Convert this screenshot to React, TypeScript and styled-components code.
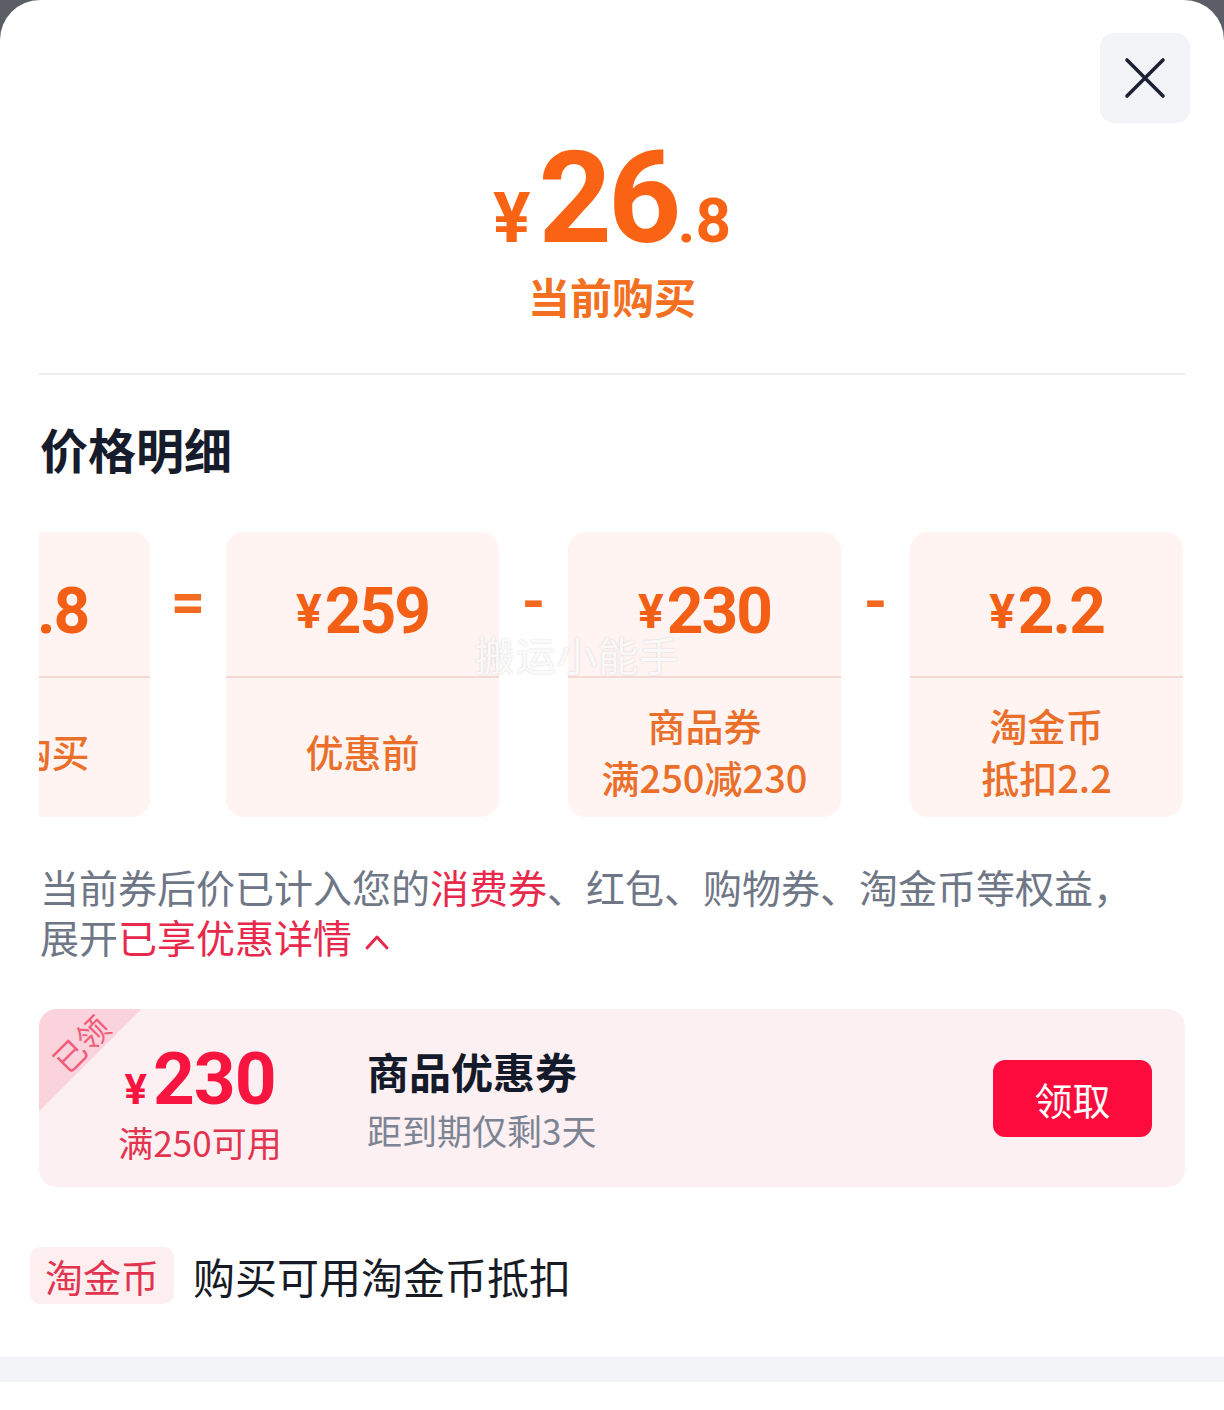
import React from 'react';
import styled, { createGlobalStyle } from 'styled-components';

const CJK = `"Noto Sans CJK SC", "Noto Sans", sans-serif`;
const NUM = `Roboto, "Noto Sans CJK SC", sans-serif`;

const Global = createGlobalStyle`
  html, body { margin: 0; padding: 0; background: #5b5e66; }
  body { font-family: ${CJK}; -webkit-font-smoothing: antialiased; }
`;

const Sheet = styled.div`
  position: relative;
  background: #ffffff;
  border-radius: 40px 40px 0 0;
  min-height: 1410px;
  display: flex;
  flex-direction: column;
  overflow: hidden;
`;

const CloseButton = styled.button`
  position: absolute;
  top: 33px;
  right: 34px;
  width: 90px;
  height: 90px;
  border: none;
  border-radius: 14px;
  background: #f2f4f7;
  display: flex;
  align-items: center;
  justify-content: center;
  padding: 0;
`;

const Header = styled.div`
  display: flex;
  flex-direction: column;
  align-items: center;
  padding-top: 134px;
`;

const BigPrice = styled.div`
  font-family: ${NUM};
  font-weight: 700;
  color: #fb6314;
  line-height: 1;
  font-size: 128px;
  white-space: nowrap;
`;

const Yen = styled.span<{ $size: number; $gap?: number }>`
  font-size: ${p => p.$size}px;
  margin-right: ${p => p.$gap ?? 2}px;
`;

const Digits = styled.span<{ $size: number; $spacing?: number }>`
  font-size: ${p => p.$size}px;
  letter-spacing: ${p => p.$spacing ?? 0}px;
`;

const HeaderLabel = styled.div`
  margin-top: 13px;
  font-size: 42px;
  line-height: 42px;
  font-weight: 700;
  color: #f2701f;
`;

const Divider = styled.div`
  height: 2px;
  background: #ececee;
  margin: 56px 39px 0;
`;

const SectionTitle = styled.h2`
  margin: 49px 0 0 40px;
  font-size: 48px;
  line-height: 48px;
  font-weight: 700;
  color: #161c2b;
`;

const TrackViewport = styled.div`
  margin: 60px 39px 0;
  overflow: hidden;
`;

const Track = styled.div`
  display: flex;
  margin-left: -162px;
`;

const Card = styled.div`
  flex: none;
  width: 273px;
  height: 285px;
  border-radius: 18px;
  background: #fff4f1;
  display: flex;
  flex-direction: column;
`;

const CardTop = styled.div`
  height: 146px;
  display: flex;
  align-items: center;
  justify-content: center;
  padding-top: 16px;
  box-sizing: border-box;
  border-bottom: 2px solid #f6d9d5;
  font-family: ${NUM};
  font-weight: 700;
  color: #f45f16;
  line-height: 1;
  white-space: nowrap;
`;

const CardBottom = styled.div`
  flex: 1;
  display: flex;
  flex-direction: column;
  align-items: center;
  justify-content: center;
  padding-top: 6px;
  font-size: 38px;
  line-height: 52px;
  font-weight: 500;
  color: #ea6f2b;
  white-space: nowrap;
`;

const Operator = styled.div<{ $width: number }>`
  flex: none;
  width: ${p => p.$width}px;
  height: 146px;
  display: flex;
  align-items: center;
  justify-content: center;
  padding-bottom: 6px;
  box-sizing: border-box;
  font-family: ${NUM};
  font-weight: 700;
  font-size: 60px;
  line-height: 1;
  color: #f26a1f;
`;

const Notice = styled.p`
  margin: 44px 0 0 40px;
  max-width: 1100px;
  font-size: 39px;
  line-height: 50px;
  color: #6f7787;
`;

const Highlight = styled.span`
  color: #e9294b;
`;

const Chevron = styled.svg`
  display: inline-block;
  width: 26px;
  height: 18px;
  margin-left: 12px;
  vertical-align: 2px;
`;

const Coupon = styled.div`
  position: relative;
  margin: 48px 39px 0;
  height: 178px;
  border-radius: 18px;
  background: #fdf0f2;
  display: flex;
  align-items: center;
  padding: 0 33px 0 0;
  overflow: hidden;
`;

const Ribbon = styled.div`
  position: absolute;
  left: 0;
  top: 0;
  width: 102px;
  height: 102px;
  background: linear-gradient(135deg, #fad3dc 50%, transparent 50%);
`;

const RibbonText = styled.span`
  position: absolute;
  left: 9px;
  top: 18px;
  font-size: 32px;
  line-height: 32px;
  color: #ef5e7c;
  transform: rotate(-45deg);
  white-space: nowrap;
`;

const Amount = styled.div`
  flex: none;
  width: 166px;
  margin-left: 78px;
  padding-top: 8px;
  display: flex;
  flex-direction: column;
  align-items: center;
`;

const AmountValue = styled.div`
  font-family: ${NUM};
  font-weight: 700;
  color: #f7143e;
  line-height: 1;
  white-space: nowrap;
`;

const AmountRule = styled.div`
  margin-top: 6px;
  font-size: 35px;
  line-height: 40px;
  color: #e2334f;
  white-space: nowrap;
`;

const CouponInfo = styled.div`
  flex: 1;
  margin-left: 84px;
  display: flex;
  flex-direction: column;
`;

const CouponTitle = styled.div`
  font-size: 42px;
  line-height: 52px;
  font-weight: 700;
  color: #141a29;
`;

const CouponSub = styled.div`
  margin-top: 12px;
  font-size: 35px;
  line-height: 42px;
  color: #7c8494;
`;

const ClaimButton = styled.button`
  flex: none;
  width: 159px;
  height: 77px;
  border: none;
  border-radius: 12px;
  background: #fe0b3d;
  color: #ffffff;
  font-family: ${CJK};
  font-size: 38px;
  padding: 0;
`;

const CoinRow = styled.div`
  margin: 60px 0 0 30px;
  display: flex;
  align-items: center;
  gap: 19px;
`;

const CoinBadge = styled.span`
  height: 57px;
  padding: 0 15px;
  border-radius: 10px;
  background: #fdeef0;
  display: flex;
  align-items: center;
  font-size: 38px;
  color: #e2334f;
`;

const CoinText = styled.span`
  font-size: 42px;
  line-height: 57px;
  color: #161b26;
`;

const FooterBar = styled.div`
  margin-top: 53px;
  height: 25px;
  background: #f3f4f7;
`;

const Watermark = styled.div`
  position: absolute;
  left: 475px;
  top: 630px;
  font-size: 40px;
  line-height: 48px;
  color: rgba(255, 255, 255, 0.9);
  text-shadow: 0 0 2px rgba(120, 120, 120, 0.35);
  pointer-events: none;
  letter-spacing: 1px;
`;

type Part = { price: string; lines: string[]; op?: { sym: string; width: number } };

const parts: Part[] = [
  { price: '26.8', lines: ['当前购买'] },
  { price: '259', lines: ['优惠前'], op: { sym: '=', width: 76 } },
  { price: '230', lines: ['商品券', '满250减230'], op: { sym: '-', width: 69 } },
  { price: '2.2', lines: ['淘金币', '抵扣2.2'], op: { sym: '-', width: 69 } },
];

export default function App() {
  return (
    <>
      <Global />
      <Sheet>
        <CloseButton aria-label="关闭">
          <svg width="42" height="42" viewBox="0 0 42 42">
            <path d="M3 3 L39 39 M39 3 L3 39" stroke="#1c2233" strokeWidth="3.6" strokeLinecap="round" />
          </svg>
        </CloseButton>

        <Header>
          <BigPrice>
            <Yen $size={70} $gap={8}>¥</Yen>
            <Digits $size={128} $spacing={-4}>26</Digits>
            <Digits $size={62}>.8</Digits>
          </BigPrice>
          <HeaderLabel>当前购买</HeaderLabel>
        </Header>

        <Divider />

        <SectionTitle>价格明细</SectionTitle>

        <TrackViewport>
          <Track>
            {parts.map((p, i) => (
              <React.Fragment key={i}>
                {p.op && <Operator $width={p.op.width}>{p.op.sym}</Operator>}
                <Card>
                  <CardTop>
                    <Yen $size={48} $gap={3}>¥</Yen>
                    <Digits $size={64} $spacing={-2}>{p.price}</Digits>
                  </CardTop>
                  <CardBottom>
                    {p.lines.map(l => (
                      <div key={l}>{l}</div>
                    ))}
                  </CardBottom>
                </Card>
              </React.Fragment>
            ))}
          </Track>
        </TrackViewport>

        <Notice>
          当前券后价已计入您的<Highlight>消费券</Highlight>、红包、购物券、淘金币等权益，展开
          <Highlight>
            已享优惠详情
            <Chevron viewBox="0 0 26 18">
              <path d="M3 15 L13 4 L23 15" fill="none" stroke="#e9294b" strokeWidth="3" strokeLinecap="round" strokeLinejoin="round" />
            </Chevron>
          </Highlight>
        </Notice>

        <Coupon>
          <Ribbon>
            <RibbonText>已领</RibbonText>
          </Ribbon>
          <Amount>
            <AmountValue>
              <Yen $size={42} $gap={6}>¥</Yen>
              <Digits $size={73} $spacing={-1}>230</Digits>
            </AmountValue>
            <AmountRule>满250可用</AmountRule>
          </Amount>
          <CouponInfo>
            <CouponTitle>商品优惠券</CouponTitle>
            <CouponSub>距到期仅剩3天</CouponSub>
          </CouponInfo>
          <ClaimButton>领取</ClaimButton>
        </Coupon>

        <CoinRow>
          <CoinBadge>淘金币</CoinBadge>
          <CoinText>购买可用淘金币抵扣</CoinText>
        </CoinRow>

        <FooterBar />

        <Watermark>搬运小能手</Watermark>
      </Sheet>
    </>
  );
}
